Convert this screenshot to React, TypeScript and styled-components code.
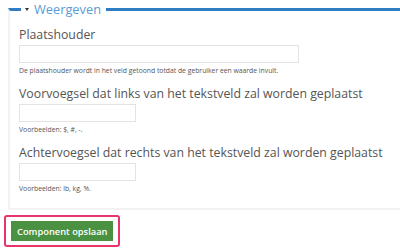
import styled, { createGlobalStyle } from "styled-components";

const Global = createGlobalStyle`
  html, body {
    margin: 0;
    padding: 0;
    background: #ffffff;
    font-family: "Open Sans", "Liberation Sans", sans-serif;
  }
`;

const Page = styled.div`
  width: 400px;
  height: 251px;
  overflow: hidden;
  padding: 0 0 0 8px;
  box-sizing: border-box;
`;

const Fieldset = styled.fieldset`
  margin: 0;
  padding: 0 10px 14px 9px;
  width: 420px;
  box-sizing: border-box;
  border: 2px solid #f2f2f2;
  border-right: none;
  border-top: 3px solid #2f7ec4;
`;

const Legend = styled.legend`
  margin-left: 2px;
  padding: 0 5px 0 4px;
  color: #5b9bd5;
  font-size: 12.8px;
  line-height: 18px;
  display: flex;
  align-items: center;
  gap: 5px;
`;

const Caret = styled.span`
  width: 0;
  height: 0;
  border-left: 2.5px solid transparent;
  border-right: 2.5px solid transparent;
  border-top: 3px solid #333;
  margin-top: 1px;
`;

const Field = styled.div`
  display: flex;
  flex-direction: column;
  align-items: flex-start;
  margin-top: 9px;

  &:first-of-type {
    margin-top: 8px;
  }
`;

const Label = styled.label`
  color: #555;
  font-size: 12.3px;
  line-height: 18px;
  white-space: nowrap;
`;

const Input = styled.div<{ $w: number }>`
  width: ${(p) => p.$w}px;
  height: 16px;
  border: 1px solid #e3e3e3;
  margin-top: 1px;
`;

const Help = styled.div`
  color: #555;
  font-size: 6.8px;
  line-height: 10px;
  margin-top: 3px;
  white-space: nowrap;
`;

const Bar = styled.div`
  padding: 5px 0 0 0;
  margin-left: -4px;
`;

const Highlight = styled.div`
  display: inline-block;
  border: 2px solid #e8336d;
  border-radius: 3px;
  padding: 4px 5px;
`;

const Button = styled.button`
  background: #4a9142;
  color: #fff;
  border: none;
  font-family: "Open Sans", "Liberation Sans", sans-serif;
  font-size: 9.3px;
  font-weight: 600;
  height: 20px;
  padding: 0 6px;
  display: block;
`;

export default function App() {
  return (
    <Page>
      <Global />
      <Fieldset>
        <Legend>
          <Caret />
          Weergeven
        </Legend>
        <Field>
          <Label>Plaatshouder</Label>
          <Input $w={278} />
          <Help>De plaatshouder wordt in het veld getoond totdat de gebruiker een waarde invult.</Help>
        </Field>
        <Field>
          <Label>Voorvoegsel dat links van het tekstveld zal worden geplaatst</Label>
          <Input $w={115} />
          <Help>Voorbeelden: $, #, -.</Help>
        </Field>
        <Field>
          <Label>Achtervoegsel dat rechts van het tekstveld zal worden geplaatst</Label>
          <Input $w={115} />
          <Help>Voorbeelden: lb, kg, %.</Help>
        </Field>
      </Fieldset>
      <Bar>
        <Highlight>
          <Button>Component opslaan</Button>
        </Highlight>
      </Bar>
    </Page>
  );
}
